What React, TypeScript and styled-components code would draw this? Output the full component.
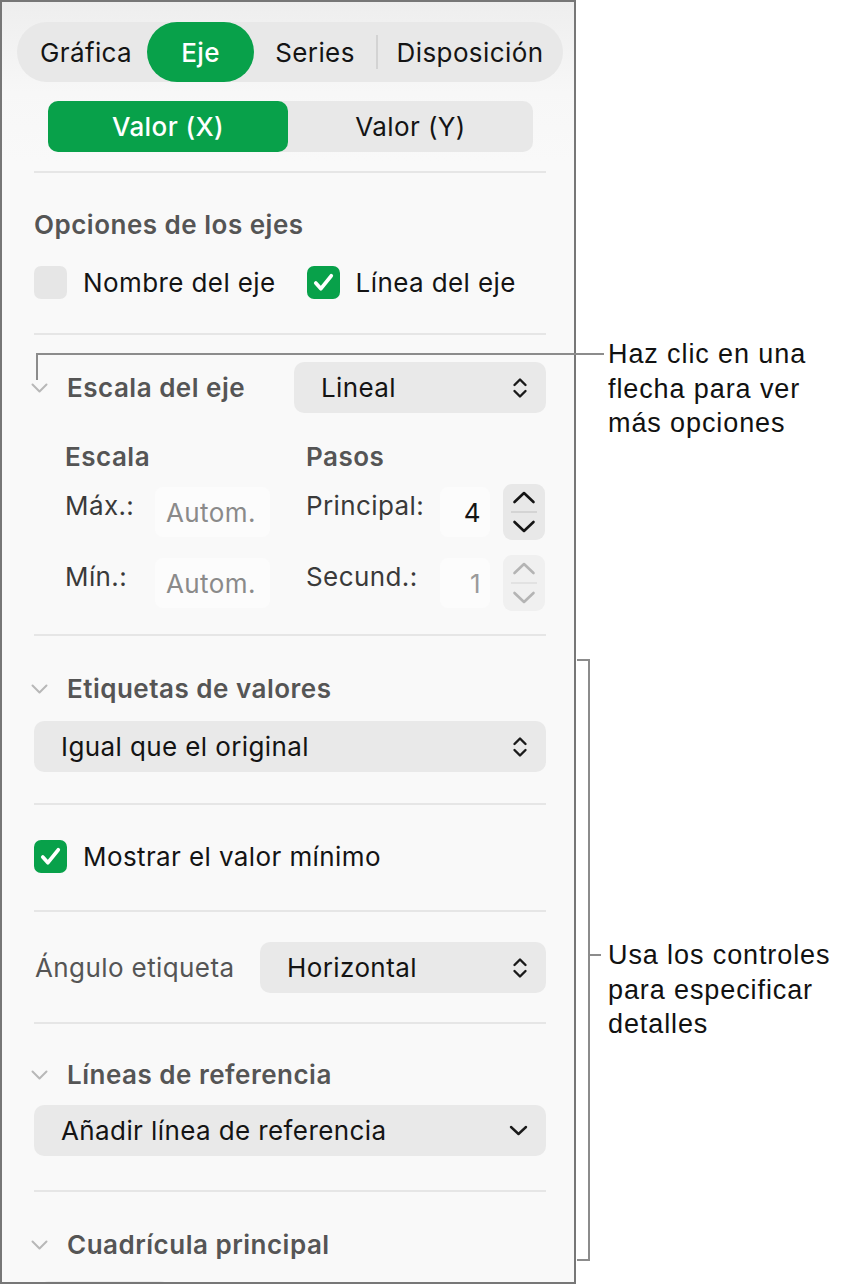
import React from "react";
import styled, { createGlobalStyle } from "styled-components";

const GREEN = "#08a14a";

const GlobalStyle = createGlobalStyle`
  html, body {
    margin: 0;
    padding: 0;
    background: #ffffff;
  }
  body {
    font-family: Inter, "Noto Sans", sans-serif;
    font-size: 26px;
    letter-spacing: 0.4px;
    -webkit-font-smoothing: antialiased;
  }
`;

const Stage = styled.div`
  position: relative;
  width: 849px;
  height: 1287px;
  display: flex;
  align-items: flex-start;
`;

const Panel = styled.div`
  box-sizing: border-box;
  width: 576px;
  height: 1284px;
  border: 2px solid #777777;
  background: linear-gradient(#eeeeee 0, #f7f7f7 90px, #f9f9f9 160px);
  padding: 0 28px 0 32px;
  overflow: hidden;
`;

const Header = styled.div`
  padding: 20px 0 19px;
`;

const TabBar = styled.div`
  display: flex;
  align-items: center;
  height: 60px;
  margin: 0 -17px;
  border-radius: 30px;
  background: #e8e8e8;
`;

const Tab = styled.div<{ $width: number; $shift?: number; $active?: boolean }>`
  box-sizing: border-box;
  width: ${(p) => p.$width}px;
  height: 60px;
  padding-left: ${(p) => p.$shift ?? 0}px;
  display: flex;
  align-items: center;
  justify-content: center;
  border-radius: 30px;
  font-size: 26px;
  font-weight: ${(p) => (p.$active ? 500 : 400)};
  color: ${(p) => (p.$active ? "#ffffff" : "#141414")};
  background: ${(p) => (p.$active ? GREEN : "transparent")};
`;

const TabDivider = styled.div`
  width: 2px;
  height: 34px;
  background: #d3d3d3;
`;

const Segmented = styled.div`
  display: grid;
  grid-template-columns: 240px 1fr;
  height: 51px;
  margin: 19px 13px 0 14px;
  border-radius: 10px;
  background: #e8e8e8;
`;

const Segment = styled.div<{ $active?: boolean }>`
  display: flex;
  align-items: center;
  justify-content: center;
  border-radius: 10px;
  font-size: 26px;
  font-weight: ${(p) => (p.$active ? 500 : 400)};
  color: ${(p) => (p.$active ? "#ffffff" : "#141414")};
  background: ${(p) => (p.$active ? GREEN : "transparent")};
`;

const Section = styled.div<{ $top: number; $bottom: number }>`
  border-top: 2px solid #e6e6e6;
  padding: ${(p) => p.$top}px 0 ${(p) => p.$bottom}px;
  display: flex;
  flex-direction: column;
`;

const SectionTitle = styled.div`
  font-size: 26px;
  line-height: 30px;
  font-weight: 600;
  letter-spacing: 0.5px;
  color: #555555;
`;

const DisclosureRow = styled.div<{ $gap?: number }>`
  display: flex;
  align-items: center;
  margin-left: -6px;
  margin-bottom: ${(p) => p.$gap ?? 0}px;
`;

const DisclosureIcon = styled.div`
  width: 22px;
  display: flex;
  justify-content: center;
  margin-right: 17px;
`;

const CheckRow = styled.div`
  display: flex;
  align-items: center;
  gap: 31px;
  margin-top: 26px;
`;

const CheckItem = styled.label`
  display: flex;
  align-items: center;
  gap: 16px;
  font-size: 26px;
  line-height: 30px;
  color: #141414;
`;

const Box = styled.span<{ $checked?: boolean }>`
  width: 33px;
  height: 33px;
  border-radius: 7px;
  display: flex;
  align-items: center;
  justify-content: center;
  background: ${(p) => (p.$checked ? GREEN : "#e6e6e6")};
`;

const SelectBox = styled.div<{ $width?: number }>`
  box-sizing: border-box;
  ${(p) => (p.$width ? `width: ${p.$width}px;` : "width: 100%;")}
  height: 51px;
  border-radius: 10px;
  background: #e9e9e9;
  display: flex;
  align-items: center;
  justify-content: space-between;
  padding: 0 18px 0 27px;
  font-size: 26px;
  color: #141414;
`;

const Spacer = styled.div`
  flex: 1;
`;

const ScaleGrid = styled.div`
  display: grid;
  grid-template-columns: 90px 151px 134px 63px 42px;
  padding-left: 31px;
`;

const SubHead = styled.div<{ $col: string }>`
  grid-column: ${(p) => p.$col};
  font-size: 26px;
  line-height: 30px;
  font-weight: 600;
  letter-spacing: 0.5px;
  color: #555555;
  margin: 29px 0 12px;
`;

const FieldLabel = styled.div`
  align-self: start;
  padding-top: 7px;
  font-size: 26px;
  line-height: 30px;
  color: #3a3a3a;
`;

const AutoField = styled.div`
  box-sizing: border-box;
  width: 115px;
  height: 50px;
  align-self: center;
  border-radius: 8px;
  background: #fcfcfc;
  padding-left: 11px;
  display: flex;
  align-items: center;
  font-size: 26px;
  color: #8a8a8a;
`;

const NumberField = styled.div<{ $dim?: boolean }>`
  box-sizing: border-box;
  width: 50px;
  height: 50px;
  align-self: center;
  border-radius: 8px;
  background: #fcfcfc;
  padding-right: 9px;
  display: flex;
  align-items: center;
  justify-content: flex-end;
  font-size: 26px;
  color: ${(p) => (p.$dim ? "#9a9a9a" : "#141414")};
`;

const Stepper = styled.div<{ $dim?: boolean }>`
  width: 42px;
  height: 56px;
  border-radius: 9px;
  background: ${(p) => (p.$dim ? "#f0f0f0" : "#e8e8e8")};
  display: flex;
  flex-direction: column;
  align-items: center;
  justify-content: space-between;
  padding: 7px 0;
  box-sizing: border-box;
`;

const StepLine = styled.div<{ $dim?: boolean }>`
  width: 26px;
  height: 2px;
  background: ${(p) => (p.$dim ? "#e2e2e2" : "#d4d4d4")};
`;

const RowGap = styled.div`
  grid-column: 1 / -1;
  height: 15px;
`;

const AngleRow = styled.div`
  display: flex;
  align-items: center;
  justify-content: space-between;
`;

const AngleLabel = styled.div`
  font-size: 26px;
  line-height: 30px;
  color: #555555;
  margin-left: 1px;
`;

const GhostButton = styled.div`
  width: 131px;
  height: 40px;
  margin: 21px 0 0 5px;
  border-radius: 10px;
  background: #ededed;
`;

/* annotation layer */

const Leader = styled.div`
  position: absolute;
  left: 36px;
  top: 353px;
  width: 566px;
  height: 25px;
  border-top: 2px solid #8c8c8c;
  border-left: 2px solid #8c8c8c;
`;

const Bracket = styled.div`
  position: absolute;
  left: 577px;
  top: 659px;
  width: 11px;
  height: 598px;
  border: 2px solid #8c8c8c;
  border-left: none;
`;

const BracketTick = styled.div`
  position: absolute;
  left: 590px;
  top: 954px;
  width: 11px;
  height: 2px;
  background: #8c8c8c;
`;

const CalloutText = styled.div<{ $top: number }>`
  position: absolute;
  left: 608px;
  top: ${(p) => p.$top}px;
  font-family: "Liberation Sans", Arial, sans-serif;
  font-size: 27px;
  line-height: 34.5px;
  letter-spacing: 0.9px;
  color: #111111;
`;

const Disclosure = () => (
  <svg width="17" height="10" viewBox="0 0 17 10" fill="none">
    <path d="M1.5 1.5 L8.5 8.5 L15.5 1.5" stroke="#b8b8b8" strokeWidth="2" strokeLinecap="round" strokeLinejoin="round" />
  </svg>
);

const UpDown = () => (
  <svg width="16" height="22" viewBox="0 0 16 22" fill="none">
    <path d="M2.5 8 L8 2.5 L13.5 8 M2.5 14 L8 19.5 L13.5 14" stroke="#1a1a1a" strokeWidth="2.4" strokeLinecap="round" strokeLinejoin="round" />
  </svg>
);

const ChevronDown = () => (
  <svg width="19" height="11" viewBox="0 0 19 11" fill="none">
    <path d="M2 2 L9.5 9 L17 2" stroke="#1a1a1a" strokeWidth="2.4" strokeLinecap="round" strokeLinejoin="round" />
  </svg>
);

const StepArrow = ({ up, color }: { up?: boolean; color: string }) => (
  <svg width="24" height="13" viewBox="0 0 24 13" fill="none">
    <path d={up ? "M2.5 11 L12 2 L21.5 11" : "M2.5 2 L12 11 L21.5 2"} stroke={color} strokeWidth="2.6" strokeLinecap="round" strokeLinejoin="round" />
  </svg>
);

const Check = () => (
  <svg width="33" height="33" viewBox="0 0 32 32" fill="none">
    <path d="M8.5 16.5 L13.5 22 L23.5 9.5" stroke="#ffffff" strokeWidth="3.6" strokeLinecap="round" strokeLinejoin="round" />
  </svg>
);

const StepperControl = ({ dim }: { dim?: boolean }) => {
  const color = dim ? "#b4b4b4" : "#141414";
  return (
    <Stepper $dim={dim}>
      <StepArrow up color={color} />
      <StepLine $dim={dim} />
      <StepArrow color={color} />
    </Stepper>
  );
};

const App = () => {
  return (
    <Stage>
      <GlobalStyle />
      <Panel>
        <Header>
          <TabBar>
            <Tab $width={130} $shift={8}>
              Gráfica
            </Tab>
            <Tab $width={107} $active>
              Eje
            </Tab>
            <Tab $width={122}>Series</Tab>
            <TabDivider />
            <Tab $width={184}>Disposición</Tab>
          </TabBar>
          <Segmented>
            <Segment $active>Valor (X)</Segment>
            <Segment>Valor (Y)</Segment>
          </Segmented>
        </Header>

        <Section $top={37} $bottom={34}>
          <SectionTitle>Opciones de los ejes</SectionTitle>
          <CheckRow>
            <CheckItem>
              <Box />
              Nombre del eje
            </CheckItem>
            <CheckItem>
              <Box $checked>
                <Check />
              </Box>
              Línea del eje
            </CheckItem>
          </CheckRow>
        </Section>

        <Section $top={27} $bottom={23}>
          <DisclosureRow>
            <DisclosureIcon>
              <Disclosure />
            </DisclosureIcon>
            <SectionTitle>Escala del eje</SectionTitle>
            <Spacer />
            <SelectBox $width={252}>
              Lineal
              <UpDown />
            </SelectBox>
          </DisclosureRow>
          <ScaleGrid>
            <SubHead $col="1 / 3">Escala</SubHead>
            <SubHead $col="3 / 6">Pasos</SubHead>

            <FieldLabel>Máx.:</FieldLabel>
            <AutoField>Autom.</AutoField>
            <FieldLabel>Principal:</FieldLabel>
            <NumberField>4</NumberField>
            <StepperControl />

            <RowGap />

            <FieldLabel>Mín.:</FieldLabel>
            <AutoField>Autom.</AutoField>
            <FieldLabel>Secund.:</FieldLabel>
            <NumberField $dim>1</NumberField>
            <StepperControl dim />
          </ScaleGrid>
        </Section>

        <Section $top={38} $bottom={31}>
          <DisclosureRow $gap={17}>
            <DisclosureIcon>
              <Disclosure />
            </DisclosureIcon>
            <SectionTitle>Etiquetas de valores</SectionTitle>
          </DisclosureRow>
          <SelectBox>
            Igual que el original
            <UpDown />
          </SelectBox>
        </Section>

        <Section $top={35} $bottom={37}>
          <CheckItem>
            <Box $checked>
              <Check />
            </Box>
            Mostrar el valor mínimo
          </CheckItem>
        </Section>

        <Section $top={30} $bottom={29}>
          <AngleRow>
            <AngleLabel>Ángulo etiqueta</AngleLabel>
            <SelectBox $width={286}>
              Horizontal
              <UpDown />
            </SelectBox>
          </AngleRow>
        </Section>

        <Section $top={36} $bottom={34}>
          <DisclosureRow $gap={15}>
            <DisclosureIcon>
              <Disclosure />
            </DisclosureIcon>
            <SectionTitle>Líneas de referencia</SectionTitle>
          </DisclosureRow>
          <SelectBox>
            Añadir línea de referencia
            <ChevronDown />
          </SelectBox>
        </Section>

        <Section $top={38} $bottom={0}>
          <DisclosureRow>
            <DisclosureIcon>
              <Disclosure />
            </DisclosureIcon>
            <SectionTitle>Cuadrícula principal</SectionTitle>
          </DisclosureRow>
          <GhostButton />
        </Section>
      </Panel>

      <Leader />
      <CalloutText $top={337}>
        Haz clic en una
        <br />
        flecha para ver
        <br />
        más opciones
      </CalloutText>

      <Bracket />
      <BracketTick />
      <CalloutText $top={938}>
        Usa los controles
        <br />
        para especificar
        <br />
        detalles
      </CalloutText>
    </Stage>
  );
};

export default App;
